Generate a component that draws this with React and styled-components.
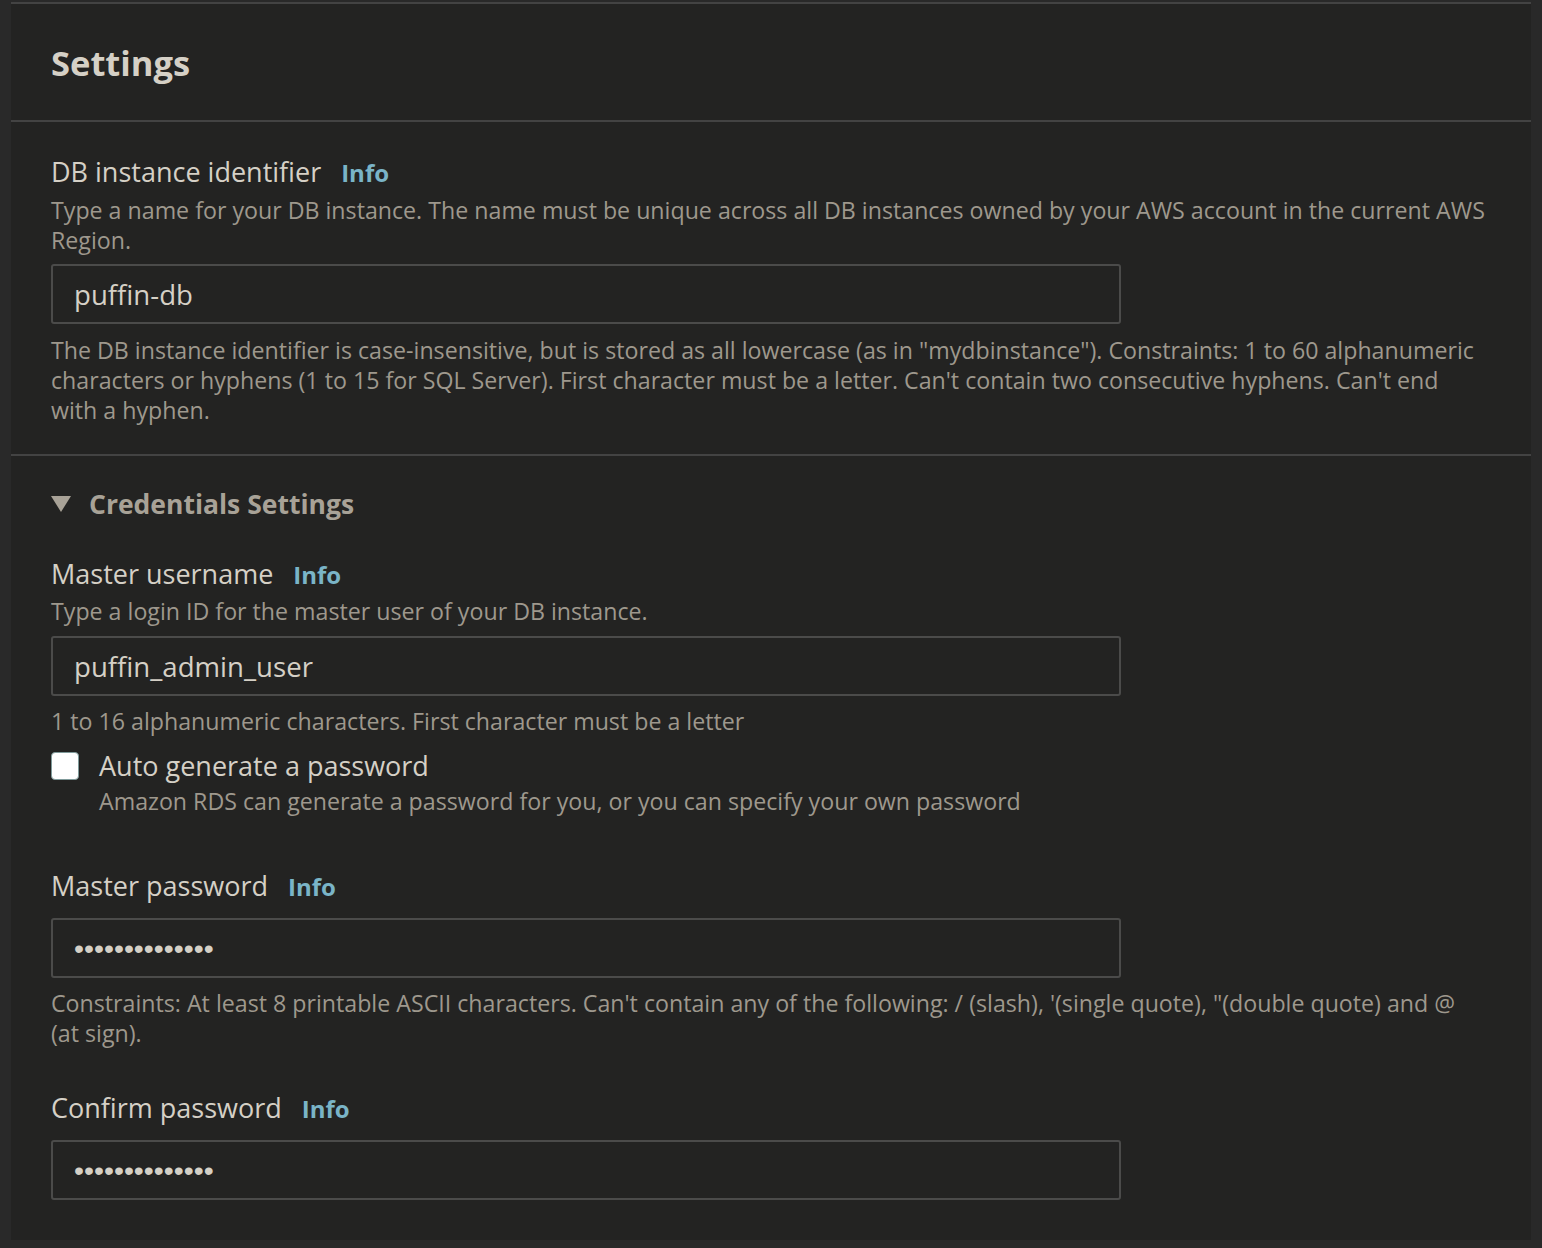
import React from 'react'
import styled, { createGlobalStyle } from 'styled-components'

const Global = createGlobalStyle`
  html, body {
    margin: 0;
    padding: 0;
    background: #292929;
  }
  body {
    font-family: "Open Sans", Lato, sans-serif;
    color: #d5d0c6;
  }
`

const Page = styled.div`
  padding: 2px 11px 7px 11px;
`

const Panel = styled.div`
  background: #232322;
  border-top: 2px solid #434343;
  min-height: 1237px;
  box-sizing: border-box;
`

const Header = styled.div`
  padding: 0 40px;
  height: 116px;
  display: flex;
  align-items: center;
  border-bottom: 2px solid #434343;
`

const Title = styled.h2`
  margin: 0;
  font-size: 34.5px;
  font-weight: 700;
  color: #d5d0c6;
  padding-top: 1px;
`

const Section = styled.div`
  padding: ${p => p.$pad};
  border-bottom: ${p => (p.$divider ? '2px solid #434343' : 'none')};
`

const Field = styled.div`
  margin-top: ${p => p.$mt || 0}px;
`

const LabelRow = styled.div`
  display: flex;
  align-items: baseline;
  gap: 20px;
  font-size: 27px;
  line-height: 36px;
  color: #d5d0c6;
`

const Info = styled.a`
  font-size: 24px;
  font-weight: 700;
  color: #7ab4c7;
  text-decoration: none;
`

const Desc = styled.p`
  margin: ${p => p.$m || '0'};
  font-size: 23.2px;
  line-height: 30px;
  color: #9e988d;
`

const Input = styled.input`
  display: block;
  box-sizing: border-box;
  width: 1070px;
  height: 60px;
  margin: ${p => p.$m || '0'};
  padding: 0 21px;
  background: #232322;
  border: 2px solid #4b4b4a;
  border-radius: 3px;
  color: #d5d0c6;
  font-family: "Open Sans", Lato, sans-serif;
  font-size: 27.6px;
  outline: none;
  &[type='password'] {
    font-family: "Liberation Sans", Arial, sans-serif;
    font-size: 28.5px;
    letter-spacing: 0px;
  }
`

const Expander = styled.div`
  display: flex;
  align-items: center;
  gap: 18px;
  font-size: 26.5px;
  font-weight: 700;
  color: #a8a297;
  height: 36px;
`

const Check = styled.label`
  display: flex;
  gap: 20px;
  margin-top: 15px;
`

const Box = styled.span`
  width: 26px;
  height: 26px;
  margin-top: 1px;
  flex: none;
  background: #fff;
  border: 1px solid #7f9a9a;
  border-radius: 4px;
`

const CheckText = styled.div`
  font-size: 27px;
  line-height: 30px;
  color: #d5d0c6;
`

export default function App() {
  return (
    <>
      <Global />
      <Page>
        <Panel>
          <Header>
            <Title>Settings</Title>
          </Header>

          <Section $divider $pad="32px 44px 29px 40px">
            <LabelRow>
              DB instance identifier <Info href="#">Info</Info>
            </LabelRow>
            <Desc $m="4px 0 0">
              Type a name for your DB instance. The name must be unique across all DB instances owned by your AWS account in the current AWS Region.
            </Desc>
            <Input readOnly value="puffin-db" $m="9px 0 0" />
            <Desc $m="11px 0 0">
              The DB instance identifier is case-insensitive, but is stored as all lowercase (as in "mydbinstance"). Constraints: 1 to 60 alphanumeric characters or hyphens (1 to 15 for SQL Server). First character must be a letter. Can't contain two consecutive hyphens. Can't end with a hyphen.
            </Desc>
          </Section>

          <Section $pad="30px 44px 40px 40px">
            <Expander>
              <svg width="20" height="16" viewBox="0 0 20 16">
                <path d="M0 0 H20 L10 16 Z" fill="#a8a297" />
              </svg>
              Credentials Settings
            </Expander>

            <Field $mt={34}>
              <LabelRow>
                Master username <Info href="#">Info</Info>
              </LabelRow>
              <Desc $m="3px 0 0">Type a login ID for the master user of your DB instance.</Desc>
              <Input readOnly value="puffin_admin_user" $m="10px 0 0" />
              <Desc $m="10px 0 0">1 to 16 alphanumeric characters. First character must be a letter</Desc>
              <Check>
                <Box />
                <div>
                  <CheckText>Auto generate a password</CheckText>
                  <Desc $m="5px 0 0">Amazon RDS can generate a password for you, or you can specify your own password</Desc>
                </div>
              </Check>
            </Field>

            <Field $mt={52}>
              <LabelRow>
                Master password <Info href="#">Info</Info>
              </LabelRow>
              <Input readOnly type="password" value="abcdefghijklmn" $m="13px 0 0" />
              <Desc $m="10px 0 0">
                Constraints: At least 8 printable ASCII characters. Can't contain any of the following: / (slash), '(single quote), "(double quote) and @ (at sign).
              </Desc>
            </Field>

            <Field $mt={42}>
              <LabelRow>
                Confirm password <Info href="#">Info</Info>
              </LabelRow>
              <Input readOnly type="password" value="abcdefghijklmn" $m="13px 0 0" />
            </Field>
          </Section>
        </Panel>
      </Page>
    </>
  )
}
